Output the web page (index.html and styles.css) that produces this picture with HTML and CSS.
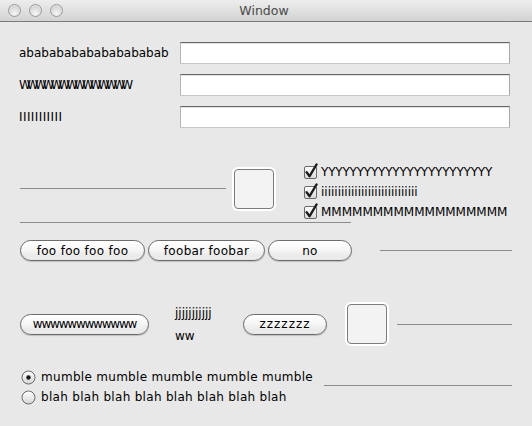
FILE: index.html
```html
<!DOCTYPE html>
<html>
<head>
<meta charset="utf-8">
<link rel="stylesheet" href="styles.css">
</head>
<body>
<div class="window">
  <div class="titlebar">
    <div class="lights"><span class="light"></span><span class="light"></span><span class="light"></span></div>
    <div class="title">Window</div>
    <div></div>
  </div>
  <div class="content">
    <div class="form">
      <div class="label">abababababababababab</div><div class="field"></div>
      <div class="label wlabel">WWWWWWWWWWWWWW</div><div class="field"></div>
      <div class="label ilabel">IIIIIIIIIII</div><div class="field"></div>
    </div>

    <div class="sec2">
      <div class="hline line1"></div>
      <div class="well well1"></div>
      <div class="checks">
        <div class="check"><svg class="cb" width="16" height="16" viewBox="0 0 16 16"><defs><linearGradient id="g1" x1="0" y1="0" x2="0" y2="1"><stop offset="0" stop-color="#ffffff"/><stop offset="1" stop-color="#d8d8d8"/></linearGradient></defs><rect x="1.5" y="3.5" width="12" height="12" rx="1.5" fill="url(#g1)" stroke="#6a6a6a"/><path d="M3.6 9.2 L6.6 13.2 L13.6 1.4" fill="none" stroke="#1e1e1e" stroke-width="2.3" stroke-linecap="round" stroke-linejoin="round"/></svg><span class="ylabel">YYYYYYYYYYYYYYYYYYYYYYYY</span></div>
        <div class="check"><svg class="cb" width="16" height="16" viewBox="0 0 16 16"><rect x="1.5" y="3.5" width="12" height="12" rx="1.5" fill="url(#g1)" stroke="#6a6a6a"/><path d="M3.6 9.2 L6.6 13.2 L13.6 1.4" fill="none" stroke="#1e1e1e" stroke-width="2.3" stroke-linecap="round" stroke-linejoin="round"/></svg><span>iiiiiiiiiiiiiiiiiiiiiiiiiiiii</span></div>
        <div class="check"><svg class="cb" width="16" height="16" viewBox="0 0 16 16"><rect x="1.5" y="3.5" width="12" height="12" rx="1.5" fill="url(#g1)" stroke="#6a6a6a"/><path d="M3.6 9.2 L6.6 13.2 L13.6 1.4" fill="none" stroke="#1e1e1e" stroke-width="2.3" stroke-linecap="round" stroke-linejoin="round"/></svg><span>MMMMMMMMMMMMMMMMMM</span></div>
      </div>
    </div>
    <div class="hline line2"></div>

    <div class="btnrow">
      <div class="btn b-foo">foo foo foo foo</div>
      <div class="btn b-foobar">foobar foobar</div>
      <div class="btn b-no">no</div>
      <div class="hline line3"></div>
    </div>

    <div class="row3">
      <div class="btn b-w">wwwwwwwwwwww</div>
      <div class="jcol"><div>jjjjjjjjjjj</div><div>ww</div></div>
      <div class="btn b-z">zzzzzzz</div>
      <div class="well well2"></div>
      <div class="hline line4"></div>
    </div>

    <div class="radiorow">
      <div class="radios">
        <div class="radio"><svg width="15" height="15" viewBox="0 0 15 15"><defs><linearGradient id="g2" x1="0" y1="0" x2="0" y2="1"><stop offset="0" stop-color="#ffffff"/><stop offset="1" stop-color="#d6d6d6"/></linearGradient></defs><circle cx="7.5" cy="7.5" r="6.5" fill="url(#g2)" stroke="#6a6a6a"/><circle cx="7.5" cy="7.5" r="2.2" fill="#1a1a1a"/></svg><span>mumble mumble mumble mumble mumble</span></div>
        <div class="radio"><svg width="15" height="15" viewBox="0 0 15 15"><circle cx="7.5" cy="7.5" r="6.5" fill="url(#g2)" stroke="#6a6a6a"/></svg><span>blah blah blah blah blah blah blah blah</span></div>
      </div>
      <div class="hline line5"></div>
    </div>
  </div>
</div>
</body>
</html>
```

FILE: styles.css
```css
html, body {
  margin: 0;
  padding: 0;
  background: #e8e8e8;
}
body {
  font-family: "DejaVu Sans", "Liberation Sans", sans-serif;
  font-size: 12px;
  color: #000;
}
.window {
  width: 532px;
  height: 426px;
  overflow: hidden;
  background: #e8e8e8;
}
.titlebar {
  height: 21px;
  border-bottom: 1px solid #7b7b7b;
  background: linear-gradient(#ededed, #d3d3d3);
  display: grid;
  grid-template-columns: 1fr auto 1fr;
  align-items: center;
}
.lights {
  display: flex;
  gap: 8px;
  padding-left: 8px;
  margin-top: -1px;
}
.light {
  width: 11px;
  height: 11px;
  border-radius: 50%;
  border: 1px solid #9a9a9a;
  background: radial-gradient(circle at 50% 78%, #f6f6f6 0%, #dcdcdc 55%, #bdbdbd 100%);
  box-shadow: inset 0 1px 1px rgba(255,255,255,0.6);
}
.title {
  font-size: 12.5px;
  color: #4a4a4a;
  margin-left: -4px;
}
.content {
  padding: 20px 20px 0 20px;
}
.form {
  display: grid;
  grid-template-columns: 160px 330px;
  row-gap: 10px;
}
.label {
  align-self: center;
  margin-left: -1px;
  white-space: nowrap;
}
.wlabel {
  letter-spacing: -4px;
}
.ilabel {
  letter-spacing: 0.4px;
}
.field {
  height: 22px;
  box-sizing: border-box;
  background: #fff;
  border: 1px solid #a8a8a8;
  border-top-color: #666;
  border-bottom-color: #c8c8c8;
  border-left-color: #b4b4b4;
  box-shadow: inset 0 1px 0 #e2e2e2;
}
.hline {
  height: 1px;
  background: #8c8c8c;
}
.sec2 {
  display: flex;
  align-items: flex-start;
  margin-top: 34px;
}
.line1 {
  width: 206px;
  margin-top: 26px;
}
.well {
  width: 40px;
  height: 40px;
  box-sizing: border-box;
  border: 1px solid #7c7c7c;
  border-radius: 4px;
  background: #f3f3f3;
  box-shadow: 0 0 0 2px #ffffff;
}
.well1 {
  margin: 7px 0 0 8px;
}
.checks {
  margin-left: 29px;
  display: flex;
  flex-direction: column;
}
.check {
  height: 20px;
  display: flex;
  align-items: center;
  gap: 2px;
  white-space: nowrap;
}
.cb {
  flex: none;
  margin-top: -3px;
}
.ylabel {
  letter-spacing: -0.2px;
}
.line2 {
  width: 331px;
}
.btnrow {
  display: flex;
  align-items: center;
  gap: 3px;
  margin-top: 17px;
}
.btn {
  height: 21px;
  box-sizing: border-box;
  border: 1px solid #6c6c6c;
  border-radius: 11px;
  background: linear-gradient(#ffffff 0%, #f6f6f6 45%, #e9e9e9 80%, #f2f2f2 100%);
  box-shadow: 0 1px 1px rgba(0,0,0,0.18), inset 0 -1px 1px rgba(0,0,0,0.06);
  display: flex;
  align-items: center;
  justify-content: center;
  letter-spacing: 0.3px;
  white-space: nowrap;
  flex: none;
}
.b-foo { width: 125px; }
.b-foobar { width: 117px; }
.b-no { width: 84px; }
.line3 {
  width: 132px;
  margin-left: 25px;
}
.row3 {
  display: flex;
  align-items: center;
  height: 46px;
  margin-top: 40px;
}
.b-w {
  width: 129px;
  letter-spacing: -1.2px;
}
.jcol {
  width: 40px;
  margin-left: 26px;
  display: flex;
  flex-direction: column;
  gap: 9px;
  line-height: 14px;
}
.b-z {
  width: 84px;
  margin-left: 28px;
  letter-spacing: 1px;
}
.well2 {
  margin-left: 20px;
}
.line4 {
  width: 115px;
  margin-left: 10px;
}
.radiorow {
  display: flex;
  align-items: flex-start;
  margin-top: 20px;
}
.radios {
  display: flex;
  flex-direction: column;
}
.radio {
  height: 20px;
  display: flex;
  align-items: center;
  gap: 5px;
  padding-left: 1px;
  letter-spacing: 0.3px;
  white-space: nowrap;
}
.radio svg {
  flex: none;
}
.line5 {
  width: 188px;
  margin-left: auto;
  margin-top: 18px;
}
```
